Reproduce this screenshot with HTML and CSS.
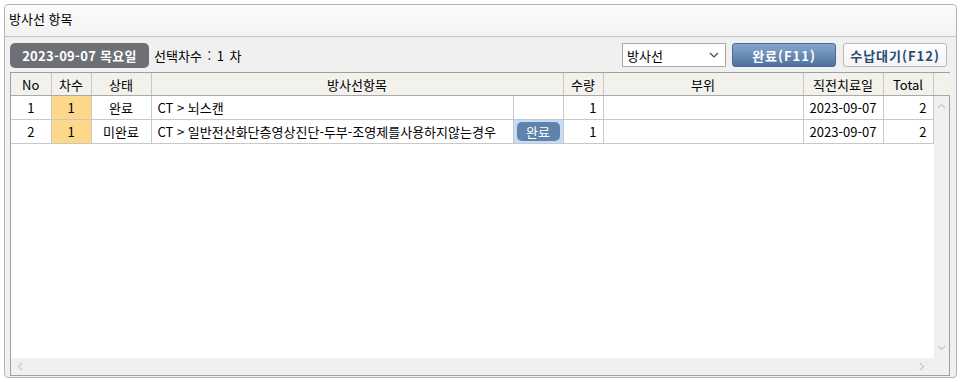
FILE: index.html
```html
<!DOCTYPE html>
<html lang="ko">
<head>
  <meta charset="UTF-8">
  <title>방사선 항목</title>
  <link rel="stylesheet" href="styles.css">
</head>
<body>
  <div class="panel">
    <div class="panel-title">방사선 항목</div>
    <div class="panel-body">
      <div class="toolbar">
        <div class="date-badge">2023-09-07 목요일</div>
        <div class="cha-info">선택차수 : 1 차</div>
        <div class="spacer"></div>
        <div class="fake-select">
          <span>방사선</span>
          <svg width="10" height="6" viewBox="0 0 10 6"><path d="M1 1 L5 5 L9 1" fill="none" stroke="#444" stroke-width="1.2"/></svg>
        </div>
        <button class="btn btn-blue">완료(F11)</button>
        <button class="btn btn-white">수납대기(F12)</button>
      </div>

      <div class="grid">
        <table class="grid-table head">
          <colgroup>
            <col style="width:40px"><col style="width:40px"><col style="width:60px"><col style="width:362px"><col style="width:50px">
            <col style="width:40px"><col style="width:200px"><col style="width:80px"><col style="width:50px"><col style="width:17px">
          </colgroup>
          <tr>
            <th>No</th><th>차수</th><th>상태</th><th colspan="2">방사선항목</th><th>수량</th><th>부위</th><th>직전치료일</th><th>Total</th><th class="sc"></th>
          </tr>
        </table>
        <div class="grid-main">
          <div class="grid-rows">
            <table class="grid-table">
              <colgroup>
                <col style="width:40px"><col style="width:40px"><col style="width:60px"><col style="width:362px"><col style="width:50px">
                <col style="width:40px"><col style="width:200px"><col style="width:80px"><col style="width:50px">
              </colgroup>
              <tr>
                <td class="c">1</td><td class="c cha">1</td><td class="c">완료</td><td class="l">CT &gt; 뇌스캔</td><td></td>
                <td class="r">1</td><td></td><td class="c">2023-09-07</td><td class="r">2</td>
              </tr>
              <tr>
                <td class="c">2</td><td class="c cha">1</td><td class="c">미완료</td><td class="l">CT &gt; 일반전산화단층영상진단-두부-조영제를사용하지않는경우</td>
                <td class="btn-cell"><span class="mini-btn">완료</span></td>
                <td class="r">1</td><td></td><td class="c">2023-09-07</td><td class="r">2</td>
              </tr>
            </table>
          </div>
          <div class="vscroll">
            <svg width="9" height="6" viewBox="0 0 9 6"><path d="M1 5 L4.5 1.5 L8 5" fill="none" stroke="#c8c8c8" stroke-width="1.2"/></svg>
            <svg width="9" height="6" viewBox="0 0 9 6"><path d="M1 1 L4.5 4.5 L8 1" fill="none" stroke="#c8c8c8" stroke-width="1.2"/></svg>
          </div>
        </div>
        <div class="hscroll">
          <svg width="6" height="9" viewBox="0 0 6 9"><path d="M5 1 L1.5 4.5 L5 8" fill="none" stroke="#c8c8c8" stroke-width="1.2"/></svg>
          <svg width="6" height="9" viewBox="0 0 6 9"><path d="M1 1 L4.5 4.5 L1 8" fill="none" stroke="#c8c8c8" stroke-width="1.2"/></svg>
        </div>
      </div>
    </div>
  </div>
</body>
</html>
```
FILE: styles.css
```css
body { margin: 0; padding: 4px 5px 2px 4px; background: #fff; font-family: "Noto Sans CJK KR", "Noto Sans", sans-serif; font-size: 13px; color: #000; }
.panel { border: 1px solid #b4b4b4; border-radius: 4px; background: #f0f0f0; height: 374px; display: flex; flex-direction: column; box-sizing: border-box; }
.panel-title { height: 31px; line-height: 28px; padding-left: 4px; font-size: 13px; border-bottom: 1px solid #c6c6c6; background: linear-gradient(#fbfbfb, #f3f3f3); border-radius: 4px 4px 0 0; }
.panel-body { flex: 1; padding: 5px 6px 1px 5px; display: flex; flex-direction: column; }
.toolbar { display: flex; align-items: center; height: 26px; margin-bottom: 4px; padding-right: 3px; }
.date-badge { background: #6d7075; color: #fff; font-weight: bold; font-size: 13px; letter-spacing: 0.3px; height: 25px; line-height: 25px; width: 139px; text-align: center; border-radius: 5px; }
.cha-info { margin-left: 5px; font-size: 13px; word-spacing: 2px; }
.spacer { flex: 1; }
.fake-select { width: 104px; height: 24px; box-sizing: border-box; border: 1px solid #a9a9a9; background: #fff; display: flex; align-items: center; justify-content: space-between; padding: 0 6px 0 4px; font-size: 13px; }
.btn { height: 24px; width: 104px; border-radius: 3px; font-family: inherit; font-size: 13px; font-weight: bold; letter-spacing: 1px; padding: 0; margin-left: 6px; }
.btn-blue { background: linear-gradient(#86a6cc, #4f729d); border: 1px solid #4a6b94; color: #fff; }
.btn-white { background: linear-gradient(#ffffff, #f4f4f4); border: 1px solid #b8b8b8; color: #2b4a74; margin-left: 7px; }
.grid { flex: 1; border: 1px solid #a0a0a0; display: flex; flex-direction: column; background: #fff; }
.grid-table { border-collapse: collapse; table-layout: fixed; width: 922px; font-size: 13px; }
.grid-table.head { width: 939px; }
.grid-table th { height: 22px; background: #f2f1ec; font-weight: normal; border-right: 1px solid #c8c8c8; border-bottom: 1px solid #a8a8a8; padding: 0; }
.grid-table th.sc { border-right: none; }
.grid-table td { height: 23px; border-right: 1px solid #c8c8c8; border-bottom: 1px solid #c8c8c8; padding: 0 5px; white-space: nowrap; overflow: hidden; }
.grid-table .c { text-align: center; }
.grid-table .l { text-align: left; padding-left: 6px; }
.grid-table .r { text-align: right; padding-right: 6px; }
.grid-table .cha { background: #fdd88b; }
.grid-table .btn-cell { background: #c5dcf5; padding: 0 3px; text-align: center; }
.mini-btn { display: inline-block; width: 43px; height: 19px; line-height: 19px; background: #5f83ad; color: #fff; border-radius: 5px; font-size: 13px; }
.grid-main { flex: 1; display: flex; }
.grid-rows { flex: 1; background: #fff; }
.vscroll { width: 17px; background: #f0f0f0; display: flex; flex-direction: column; align-items: center; justify-content: space-between; padding: 7px 0 7px; }
.hscroll { height: 17px; background: #f0f0f0; display: flex; align-items: center; justify-content: space-between; padding: 0 24px 0 6px; }
```
